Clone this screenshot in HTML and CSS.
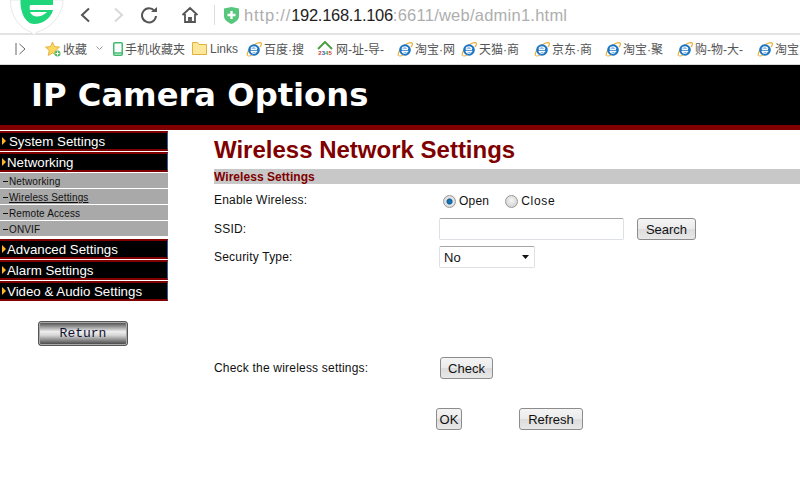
FILE: index.html
```html
<!DOCTYPE html>
<html lang="en">
<head>
<meta charset="utf-8">
<title>IP Camera Options</title>
<link rel="stylesheet" href="styles.css">
</head>
<body>
<svg class="defs" width="0" height="0" aria-hidden="true">
  <symbol id="ie" viewBox="0 0 16 16">
    <path d="M1.5 14.5C.2 12.5 4.500 5 10.500 2.500C13 1.400 15.200 1.300 15.400 2.700C15.500 3.700 14.800 5 14 6" fill="none" stroke="#e8b23a" stroke-width="1.300"/>
    <circle cx="8" cy="9" r="5.800" fill="#1c74c4"/>
    <path d="M4.800 8.200H11" stroke="#fff" stroke-width="1.500"/>
    <path d="M11.300 10.300H5.200C5.600 12.300 8.400 12.700 10.300 11.500" fill="none" stroke="#fff" stroke-width="1.300"/>
    <path d="M5 7.600C6 5.400 9.800 5.400 11 7.800" fill="none" stroke="#fff" stroke-width="1.300"/>
    <path d="M1.500 14.500C2.500 15.500 5 14.800 6.500 14" fill="none" stroke="#e8b23a" stroke-width="1"/>
  </symbol>
</svg>

<header class="chrome">
  <div class="toolbar">
    <svg class="logo" width="66" height="36" viewBox="0 0 66 36" aria-hidden="true">
      <path d="M4.500 0C4 17 15 29 25 32L28 35L31 32C44 29 57 15 57 0Z" fill="#fff" stroke="#e8e8e8"/>
      <path d="M18 0H47V5H24C23.500 7 23.500 8.500 24 10H47C45 18 37 24 28 24C20 24 14 13 14.500 0Z" fill="#1fd67a"/>
      <path d="M24 12H41C38 15 34 16.500 31 16.500C28 16.500 25.500 15 24 12Z" fill="#fff"/>
    </svg>
    <button class="nav" type="button" aria-label="Back"><svg width="12" height="16" viewBox="0 0 12 16"><path d="M10 1.500 3 8l7 6.500" fill="none" stroke="#555" stroke-width="2"/></svg></button>
    <button class="nav nav-forward" type="button" aria-label="Forward"><svg width="12" height="16" viewBox="0 0 12 16"><path d="M2 1.500 9 8l-7 6.500" fill="none" stroke="#d8d8d8" stroke-width="2"/></svg></button>
    <button class="nav nav-reload" type="button" aria-label="Reload"><svg width="18" height="18" viewBox="0 0 18 18"><path d="M14.500 5A7 7 0 1 0 16 10" fill="none" stroke="#555" stroke-width="2"/><path d="M11 6h6V1z" fill="#555"/></svg></button>
    <button class="nav nav-home" type="button" aria-label="Home"><svg width="18" height="18" viewBox="0 0 18 18"><path d="M1.500 9 9 2l7.500 7M4 8v8h10V8M8 16v-4h2v4" fill="none" stroke="#555" stroke-width="1.800"/></svg></button>
    <span class="divider"></span>
    <svg class="shield" width="15" height="17" viewBox="0 0 15 17" aria-hidden="true"><path d="M0 1.500 7.500 0 15 1.500V9c0 4-4 6.500-7.500 8C4 15.500 0 13 0 9z" fill="#56c77c"/><path d="M7.500 4v8M3.500 8h8" stroke="#fff" stroke-width="2.400"/></svg>
    <div class="url"><span class="dim dim-scheme">http://</span><span class="host">192.168.1.106</span><span class="dim dim-path">:6611/web/admin1.html</span></div>
  </div>
  <nav class="bookmarks">
    <svg class="panel-toggle" width="11" height="12" viewBox="0 0 11 12" aria-hidden="true"><path d="M1 0v12M4.500 1 10 6l-5.500 5" fill="none" stroke="#666"/></svg>
    <a class="bm bm-fav"><svg width="16" height="16" viewBox="0 0 16 16"><path d="M7.500 1 9.500 5.600 14.500 6.100 10.800 9.400 11.800 14.500 7.500 11.900 3.200 14.500 4.200 9.400.5 6.100 5.500 5.600z" fill="#fbd75b" stroke="#dca830" stroke-width=".8"/><circle cx="12.500" cy="12.500" r="3" fill="#4cb964"/><path d="M12.500 10.500v4M10.500 12.500h4" stroke="#fff"/></svg>收藏<svg class="caret" width="7" height="5" viewBox="0 0 7 5"><path d="M.5.500 3.500 3.500 6.500.5" fill="none" stroke="#999"/></svg></a>
    <a class="bm bm-phone"><svg width="10" height="14" viewBox="0 0 10 14"><rect x=".75" y=".75" width="8.500" height="12.500" rx="1" fill="#fff" stroke="#3fbb6e" stroke-width="1.500"/><path d="M1 11h8" stroke="#3fbb6e" stroke-width="1.500"/></svg>手机收藏夹</a>
    <a class="bm bm-links"><svg width="15" height="13" viewBox="0 0 15 13"><path d="M.5 12.500V.5h5l1.500 2h7.500v10z" fill="#fde79a" stroke="#e2b13c"/></svg>Links</a>
    <a class="bm bm-baidu"><svg width="16" height="16"><use href="#ie"/></svg>百度·搜</a>
    <a class="bm bm-2345"><span class="house"><svg width="16" height="9" viewBox="0 0 16 9"><path d="M1 8 8 1l7 7" fill="none" stroke="#4f9d45" stroke-width="2"/></svg><span class="house-num"><i class="n-red">2</i><i class="n-blue">3</i><i class="n-green">4</i><i class="n-red">5</i></span></span>网-址-导-</a>
    <a class="bm bm-tb1"><svg width="16" height="16"><use href="#ie"/></svg>淘宝·网</a>
    <a class="bm bm-tm"><svg width="16" height="16"><use href="#ie"/></svg>天猫·商</a>
    <a class="bm bm-jd"><svg width="16" height="16"><use href="#ie"/></svg>京东·商</a>
    <a class="bm bm-tb2"><svg width="16" height="16"><use href="#ie"/></svg>淘宝·聚</a>
    <a class="bm bm-gw"><svg width="16" height="16"><use href="#ie"/></svg>购-物-大-</a>
    <a class="bm bm-tb3"><svg width="16" height="16"><use href="#ie"/></svg>淘宝·</a>
  </nav>
</header>

<div class="banner"><h1>IP Camera Options</h1></div>

<div class="page">
  <aside class="sidebar">
    <a class="menu menu-indent"><i class="arrow"></i>System Settings</a>
    <a class="menu"><i class="arrow"></i>Networking</a>
    <ul class="submenu">
      <li>Networking</li>
      <li class="current">Wireless Settings</li>
      <li>Remote Access</li>
      <li>ONVIF</li>
    </ul>
    <a class="menu"><i class="arrow"></i>Advanced Settings</a>
    <a class="menu"><i class="arrow"></i>Alarm Settings</a>
    <a class="menu"><i class="arrow"></i>Video &amp; Audio Settings</a>
    <button class="return" type="button">Return</button>
  </aside>
  <main class="content">
    <h2>Wireless Network Settings</h2>
    <h3>Wireless Settings</h3>
    <form class="form">
      <div class="row row-enable">
        <span class="label">Enable Wireless:</span>
        <span class="radios">
          <label class="radio-open"><input type="radio" name="w" checked>Open</label>
          <label class="radio-close"><input type="radio" name="w">Close</label>
        </span>
      </div>
      <div class="row row-ssid">
        <span class="label">SSID:</span>
        <input class="text" type="text">
        <button class="btn btn-search" type="button">Search</button>
      </div>
      <div class="row row-sec">
        <span class="label">Security Type:</span>
        <span class="select">No<svg width="7" height="4" viewBox="0 0 7 4"><path d="M0 0h7L3.500 4z" fill="#111"/></svg></span>
      </div>
      <div class="row row-check">
        <span class="label">Check the wireless settings:</span>
        <button class="btn" type="button">Check</button>
      </div>
      <div class="actions">
        <button class="btn btn-ok" type="button">OK</button>
        <button class="btn btn-refresh" type="button">Refresh</button>
      </div>
    </form>
  </main>
</div>
</body>
</html>
```
FILE: styles.css
```css
* { box-sizing: border-box; }
html, body { margin: 0; height: 484px; overflow: hidden; background: #fff; }
body { font-family: "Liberation Sans", Arial, sans-serif; font-size: 12px; color: #111; }
.defs { position: absolute; }

/* browser chrome */
.chrome { height: 65px; display: flex; flex-direction: column; }
.toolbar { height: 35px; flex: none; display: flex; align-items: center; position: relative; border-bottom: 2px solid #e3e3e3; padding: 0 0 3px 77px; }
.logo { position: absolute; left: 6px; top: 0; }
.nav { flex: none; border: 0; background: none; padding: 0; margin: 0; display: flex; align-items: center; justify-content: center; width: 16px; height: 18px; }
.nav-forward { margin-left: 18px; }
.nav-reload { margin-left: 13px; width: 18px; }
.nav-home { margin-left: 23px; width: 18px; }
.divider { flex: none; width: 1px; height: 20px; background: #ddd; margin-left: 15px; }
.shield { flex: none; margin-left: 9px; }
.url { margin-left: 5px; font-size: 16.500px; color: #222; white-space: nowrap; }
.host { letter-spacing: -.3px; }
.dim { color: #aeaeae; }
.dim-scheme { letter-spacing: .85px; }
.dim-path { letter-spacing: .24px; }
.bookmarks { height: 30px; flex: none; display: flex; align-items: center; border-bottom: 1px solid #d8d8d8; padding: 0 0 2px 15px; font-family: "Liberation Sans", "Noto Sans CJK SC", sans-serif; font-size: 12px; color: #555; white-space: nowrap; overflow: hidden; }
.panel-toggle { flex: none; }
.bm { display: flex; align-items: center; gap: 2px; flex: none; }
.bm-fav { margin-left: 19px; }
.caret { margin-left: 7px; }
.bm-phone { margin-left: 10px; }
.bm-links { margin-left: 7px; gap: 3px; }
.bm-baidu { margin-left: 8px; }
.bm-2345 { margin-left: 13px; gap: 3px; }
.bm-tb1 { margin-left: 13px; }
.bm-tm { margin-left: 6px; }
.bm-jd { margin-left: 15px; }
.bm-tb2 { margin-left: 13px; }
.bm-gw { margin-left: 14px; }
.bm-tb3 { margin-left: 14px; }
.house { width: 16px; height: 16px; display: flex; flex-direction: column; align-items: center; }
.house-num { font: bold 6px/6px "Liberation Sans", sans-serif; }
.house-num i { font-style: normal; }
.n-red { color: #d03a2f; }
.n-blue { color: #2c62b8; }
.n-green { color: #3d9b45; }

/* banner */
.banner { height: 65px; background: #000; border-bottom: 5px solid #800000; padding-left: 31px; }
.banner h1 { margin: 0; font: bold 32.200px/60px "DejaVu Sans", Verdana, sans-serif; color: #fff; }

/* layout */
.page { display: flex; }
.sidebar { width: 168px; flex: none; padding-top: 1px; display: flex; flex-direction: column; }
.content { flex: 1; padding: 5px 0 0 46px; }

/* sidebar */
.menu { height: 20px; margin-bottom: 1px; background: #000; border-top: 2px solid #800000; border-bottom: 2px solid #800000; border-right: 1px solid #335f96; color: #fff; font-size: 13.300px; line-height: 15px; display: flex; align-items: center; }
.menu-indent .arrow { margin-right: 3px; }
.arrow { flex: none; width: 0; height: 0; border-left: 4px solid #fdb52e; border-top: 4px solid transparent; border-bottom: 4px solid transparent; margin-left: 2px; margin-right: 1px; }
.submenu { list-style: none; margin: 0 0 2px; padding: 0; }
.submenu li { height: 16px; background: #a9a9a9; border-bottom: 1px solid #fff; font-size: 10px; line-height: 17px; letter-spacing: .13px; color: #111; width: 168px; padding-left: 9px; position: relative; }
.submenu li::before { content: ""; position: absolute; left: 3px; top: 8px; width: 5px; height: 1px; background: #111; }
.current { text-decoration: underline; }
.return { margin: 19px 0 0 38px; width: 90px; height: 25px; padding: 0; border: 1px solid #555; outline: 1px solid #aaa; outline-offset: -2px; border-radius: 3px; background: linear-gradient(#444, #eee 42%, #d5d5d5 58%, #3c3c3c); font: 13px "Liberation Mono", monospace; color: #113; }

/* content */
.content h2 { margin: 0; font: bold 24px/30px "Liberation Sans", sans-serif; color: #800000; }
.content h3 { margin: 4px 0 0; height: 15px; background: #c8c8c8; font: bold 12px/16px "Liberation Sans", sans-serif; color: #800000; letter-spacing: .05px; }
.form { display: flex; flex-direction: column; }
.row { display: grid; grid-template-columns: 225px 185px auto; align-items: center; justify-items: start; }
.label { letter-spacing: .2px; }
.row-enable { margin-top: 7px; height: 18px; }
.row-ssid { margin-top: 9px; height: 22px; }
.row-sec { margin-top: 6px; height: 22px; }
.row-check { margin-top: 89px; height: 22px; }
.actions { margin: 29px 0 0 222px; display: flex; gap: 57px; }
.radios { display: flex; grid-column: 2 / 4; font-size: 12px; padding-left: 4px; padding-top: 2px; }
.radios label { display: flex; align-items: center; gap: 3px; letter-spacing: .2px; }
.radio-close { margin-left: 16px; }
.radios .radio-close { letter-spacing: .7px; }
.radio-close input { margin-right: 8px; }
.radios input { appearance: none; width: 13px; height: 13px; margin: 0; border-radius: 50%; border: 1px solid #9a9a9a; background: radial-gradient(circle at 50% 40%, #f6f6f6, #c9c9c9); }
.radios input:checked { background: radial-gradient(circle, #1a82c4 0, #0d5f9a 2.500px, #e4e4e4 3.500px, #d4d4d4 100%); }
.text { width: 185px; height: 22px; border: 1px solid #dde0e4; border-top-color: #a5a5a5; border-radius: 2px; background: #fff; margin: 0; }
.select { width: 96px; height: 22px; border: 1px solid #dde0e4; border-top-color: #a5a5a5; border-radius: 2px; display: flex; align-items: center; justify-content: space-between; padding: 0 5px 0 4px; font-size: 13px; }
.btn { height: 22px; padding: 0; border: 1px solid #8c8c8c; border-radius: 3px; background: linear-gradient(#f4f4f4, #ebebeb 50%, #dcdcdc 51%, #e8e8e8); font: 13px "Liberation Sans", sans-serif; color: #111; }
.btn-search { margin-left: 13px; width: 59px; }
.row-check .btn { margin-left: 1px; width: 53px; }
.btn-ok { width: 26px; }
.btn-refresh { width: 64px; }
```
